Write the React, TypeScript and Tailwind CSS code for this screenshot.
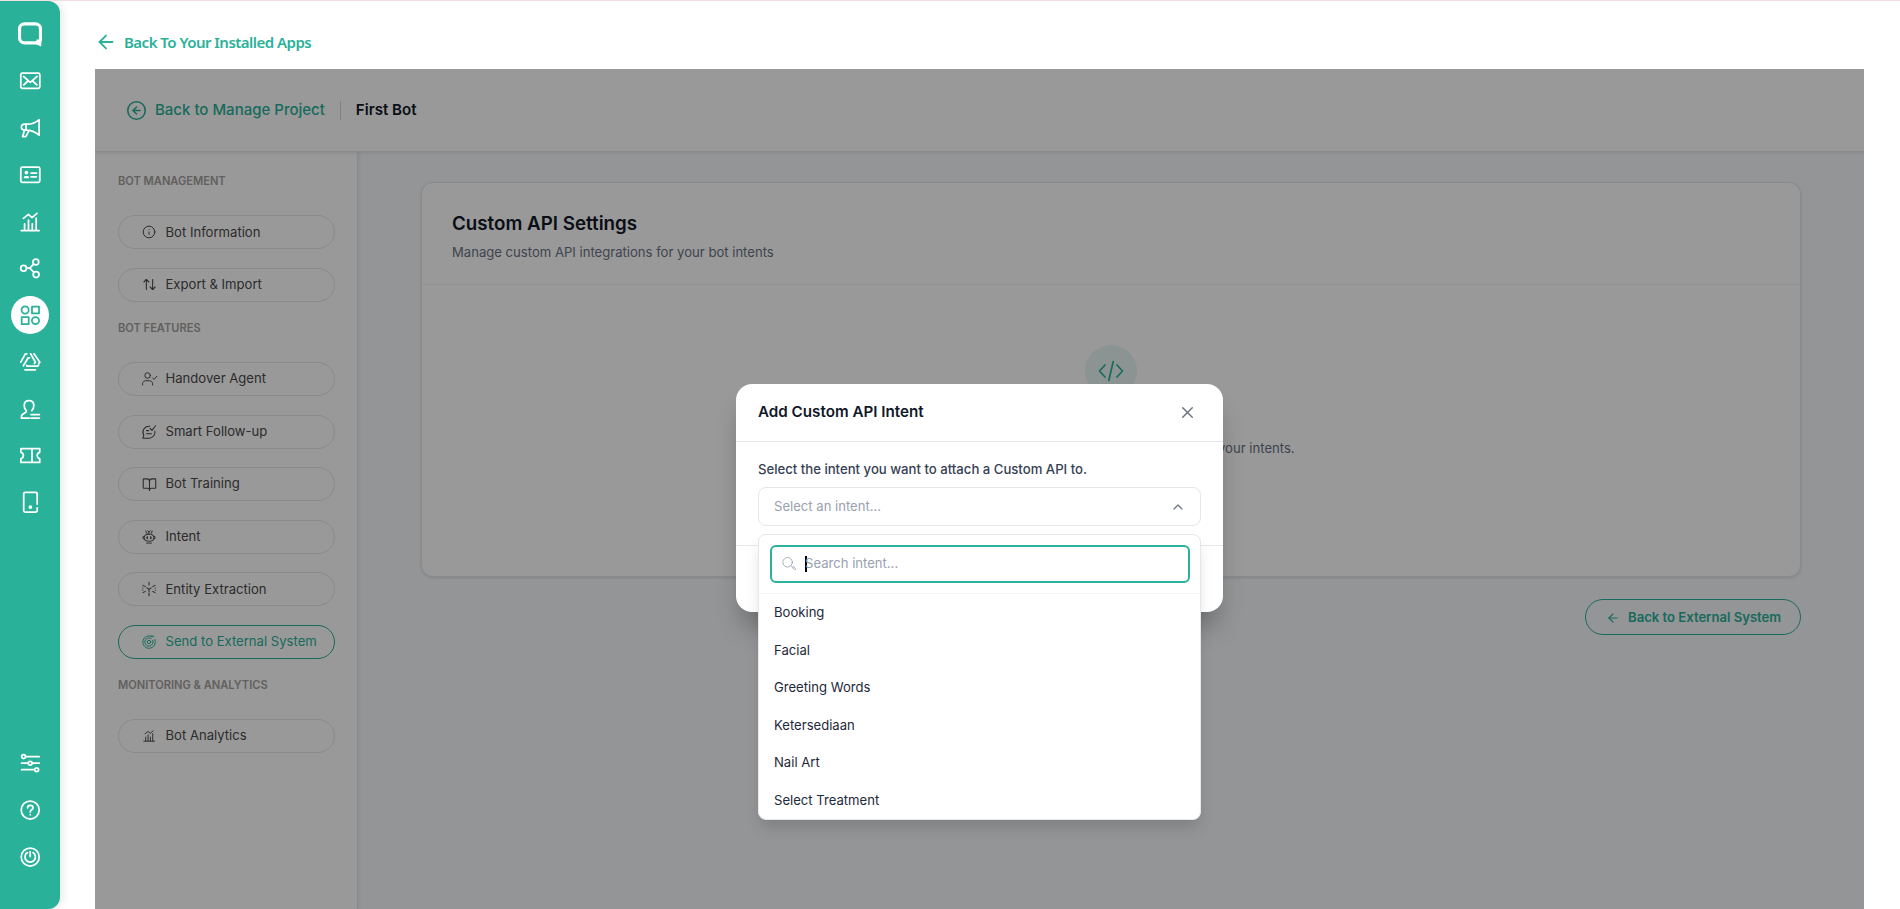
import React, { useState } from 'react';
import { ArrowLeft, ArrowUpDown, BookOpen, ChevronUp, CircleArrowLeft, Info, X } from 'lucide-react';

type IconProps = { size?: number; stroke?: number; children: React.ReactNode };

const Svg: React.FC<IconProps> = ({ size = 20, stroke = 1.75, children }) => (
  <svg
    width={size}
    height={size}
    viewBox="0 0 20 20"
    fill="none"
    stroke="currentColor"
    strokeWidth={stroke}
    strokeLinecap="round"
    strokeLinejoin="round"
    className="shrink-0 overflow-visible"
  >
    {children}
  </svg>
);

const LogoIcon = () => (
  <svg width="24" height="25" viewBox="0 0 24 25" fill="none" stroke="currentColor" className="shrink-0">
    <path d="M20.5 20.8h-14a5 5 0 0 1-5-5v-9a5 5 0 0 1 5-5h11a5 5 0 0 1 5 5v12" strokeWidth="3.2" />
    <path d="M18.5 17.5h5.2l-.6 7-5.4-2.6z" fill="currentColor" stroke="none" />
  </svg>
);

const MailIcon = () => (
  <Svg>
    <rect x="0.8" y="2.1" width="19" height="15.2" rx="1.6" />
    <path d="M3.6 5.5 10.3 11.3 17 5.5M3.8 13.9l3.6-3.4M16.8 13.9l-3.6-3.4" />
  </Svg>
);

const MegaphoneIcon = () => (
  <Svg>
    <path d="M6 6.2H4.3a2.9 2.9 0 0 0-2.9 3.3A2.9 2.9 0 0 0 4.3 12H6M6 6.2V12M6 6.2c5 .3 9-.9 13.1-4.6v15.6C15 13.5 11 12 6 12M4.5 12.6 2.6 18.6h3.2l3.2-6" />
  </Svg>
);

const ContactIcon = () => (
  <Svg>
    <rect x="0.8" y="2.1" width="19" height="15.2" rx="1.6" />
    <circle cx="6.4" cy="7.6" r="1" />
    <path d="M4.6 12.4h3.6M5 11.9h2.8M11 8h5.4M11 11.8h5.4" />
  </Svg>
);

const ChartIcon = ({ size = 20, stroke = 1.75 }) => (
  <Svg size={size} stroke={stroke}>
    <path d="M1.2 18.6h18M4.6 18.6v-6.800M8.5 18.6V8.2M12.3 18.6v-6.800M16.2 18.6V6M3.4 6.4l5-4 3.6 3.2L17 1.4" />
  </Svg>
);

const ShareIcon = () => (
  <Svg>
    <circle cx="3.6" cy="10.2" r="2.9" />
    <circle cx="15.8" cy="4" r="2.9" />
    <circle cx="16.1" cy="16.6" r="2.9" />
    <path d="M6.6 10.2h3.2l3.8-4M9.8 10.2l4.1 4.1" />
  </Svg>
);

const AppsIcon = () => (
  <Svg>
    <circle cx="5.1" cy="5" r="3.6" />
    <rect x="12" y="1.6" width="7" height="6.8" />
    <rect x="1.7" y="12.2" width="7" height="6.8" />
    <circle cx="15.5" cy="15.6" r="3.6" />
  </Svg>
);

const TriangleIcon = () => (
  <Svg>
    <path d="M.8 10.2 5.2 2.2l1.6-.4M3.4 13.8l4.8-8 1.2.1M10.6 1.8l4.8 8.4-1 1.4M14 1.8l5.8 8.4M19.6 10.4l-.8 1.2M7 14.2h10.6l1-1M5 17.8h10.4M7 14.2l-.2-.8" />
  </Svg>
);

const PersonIcon = () => (
  <Svg>
    <path d="M11.8 11.6c1.4-1.2 2-3.2 2-5.2 0-3-2-4.9-4.8-4.9S4.2 3.4 4.2 6.4c0 2.2.7 3.7 1.9 4.8.6.8.2 1.8-.6 2.3L2 15.8c-.6.5-.6 1.2-.6 3.2h7.8M11 15.6h8.4M11 19h8.4" />
  </Svg>
);

const TicketIcon = () => (
  <Svg>
    <path d="M.9 2.6h18.8v3.5c-1.9.9-2.6 1.9-2.6 3.4s.7 2.5 2.6 3.4v3.5H.9v-3.5c1.9-.9 2.6-1.9 2.6-3.4S2.8 7 .9 6.1zM12 2.6v13.8" />
  </Svg>
);

const DeviceIcon = () => (
  <Svg>
    <path d="M17.2 12V1.8c0-.8-.6-1.5-1.5-1.5H5.2c-.9 0-1.5.7-1.5 1.5v16.8c0 .8.6 1.5 1.5 1.5h10.5c.9 0 1.5-.7 1.5-1.5v-2.8" />
    <circle cx="10.4" cy="15" r="1" fill="currentColor" />
  </Svg>
);

const SlidersIcon = () => (
  <Svg>
    <circle cx="3.6" cy="3.6" r="1.9" />
    <circle cx="10.2" cy="10.2" r="1.9" />
    <circle cx="16.7" cy="16.7" r="1.9" />
    <path d="M5.8 3.6h13.4M1.6 10.2h6.3M12.4 10.2h6.8M1.6 16.7h12.8" />
  </Svg>
);

const HelpIcon = () => (
  <Svg>
    <circle cx="10.2" cy="10" r="9" />
    <path d="M7.6 7.8c0-1.6 1.2-2.5 2.7-2.5s2.7 1 2.7 2.4c0 2-2.7 2.2-2.7 4.2M10.3 14.7v.1" />
  </Svg>
);

const PowerIcon = () => (
  <Svg>
    <circle cx="10.2" cy="10" r="9" />
    <path d="M10.2 4.6v5M7.4 5.6a5.2 5.2 0 1 0 5.6 0" />
  </Svg>
);

const AgentIcon = () => (
  <Svg size={14} stroke={1.4}>
    <circle cx="8" cy="5" r="4" />
    <path d="M.8 18.5v-1.7c0-2.5 2-4.3 4.3-4.3h5.7c2.3 0 4.3 1.8 4.3 4.3v1.7M15.2 8.6l2 2 4-4.4" />
  </Svg>
);

const FollowUpIcon = () => (
  <Svg size={14} stroke={1.5}>
    <path d="M11 1.7H9.8A8.5 8.5 0 0 0 2.6 14.6L1.2 18.8H10a8.5 8.5 0 0 0 8.4-10M6.5 8h3M6.5 12.4h7M11.5 5l2.8 2.7L19.4 1" />
  </Svg>
);

const IntentIcon = () => (
  <Svg size={14} stroke={1.4}>
    <path d="M10 6V2.5M6.5 4.5 5.5 1.5M13.5 4.5l1-3M8 1l2 2 2-2M6.5 18.7h7M3 9.500H1.500v3H3M17 9.500h1.500v3H17" />
    <rect x="3" y="6" width="14" height="10" rx="5" />
    <path d="M7.5 10v2M12.5 10v2" strokeWidth="2.2" />
  </Svg>
);

const EntityIcon = () => (
  <Svg size={14} stroke={1.5}>
    <path d="M10 .5v3.8M10 15.7v3.8M10 10.5V14M10 10.5 7 8.3M10 10.5l3-2.2M1.500 4.800l3.200 1.800M18.500 4.800l-3.200 1.800M1.500 15.200l3.200-1.800M18.500 15.200l-3.200-1.800M1.200 8.300v.2M1.200 11.500v.2M18.800 8.300v.2M18.800 11.500v.2" />
  </Svg>
);

const TargetIcon = () => (
  <Svg size={14} stroke={1.4}>
    <path d="M14.500 2.200A9 9 0 1 0 18.400 6.500M13 4.900a5.900 5.900 0 1 0 2.400 2.800M13.500 1.200l3.500.8" />
    <circle cx="10" cy="10" r="2.4" />
  </Svg>
);

const SearchIcon = () => (
  <Svg size={14} stroke={1.2}>
    <circle cx="8" cy="7.5" r="6.800" />
    <path d="m13 12.5 2.200 2.200M15 14.800l1.300-1.300 3 3a1 1 0 0 1-1.400 1.400z" />
  </Svg>
);

const topRail = [
  LogoIcon, MailIcon, MegaphoneIcon, ContactIcon, ChartIcon, ShareIcon,
  AppsIcon, TriangleIcon, PersonIcon, TicketIcon, DeviceIcon,
];
const bottomRail = [SlidersIcon, HelpIcon, PowerIcon];

const menu = [
  {
    title: 'BOT MANAGEMENT',
    items: [
      { label: 'Bot Information', icon: <Info size={14} strokeWidth={1.7} /> },
      { label: 'Export & Import', icon: <ArrowUpDown size={15} strokeWidth={1.7} /> },
    ],
  },
  {
    title: 'BOT FEATURES',
    items: [
      { label: 'Handover Agent', icon: <AgentIcon /> },
      { label: 'Smart Follow-up', icon: <FollowUpIcon /> },
      { label: 'Bot Training', icon: <BookOpen size={15} strokeWidth={1.7} /> },
      { label: 'Intent', icon: <IntentIcon /> },
      { label: 'Entity Extraction', icon: <EntityIcon /> },
      { label: 'Send to External System', icon: <TargetIcon />, active: true },
    ],
  },
  {
    title: 'MONITORING & ANALYTICS',
    items: [{ label: 'Bot Analytics', icon: <ChartIcon size={12} stroke={1.6} /> }],
  },
];

const intents = ['Booking', 'Facial', 'Greeting Words', 'Ketersediaan', 'Nail Art', 'Select Treatment'];

const Rail = () => (
  <nav className="flex w-[60px] shrink-0 flex-col items-center justify-between rounded-r-xl bg-[#29b199] pt-2.5 pb-[29px] text-white shadow-[2px_0_8px_rgba(0,0,0,0.1)]">
    <div className="flex flex-col items-center">
      {topRail.map((Icon, i) => (
        <button key={i} className="flex h-[46.8px] items-center justify-center">
          <span className={Icon === AppsIcon ? 'flex size-[38px] items-center justify-center rounded-full bg-white text-[#29b199]' : ''}>
            <Icon />
          </span>
        </button>
      ))}
    </div>
    <div className="flex flex-col items-center">
      {bottomRail.map((Icon, i) => (
        <button key={i} className="flex h-[47px] items-center justify-center">
          <Icon />
        </button>
      ))}
    </div>
  </nav>
);

const BotMenu = () => (
  <aside className="z-10 w-[263px] shrink-0 border-r border-gray-200 bg-white pt-[3.4px] pr-[22px] pl-[23px] shadow-[1px_0_4px_rgba(0,0,0,0.08)]">
    {menu.map((group) => (
      <div key={group.title} className="pt-[17px]">
        <h3 className="mb-[25px] text-[11.1px]/[18px] font-semibold text-[#a3a09d]">{group.title}</h3>
        <div className="flex flex-col gap-[18.6px]">
          {group.items.map((item) => (
            <button
              key={item.label}
              className={`flex h-[34px] items-center gap-[9px] rounded-full border pl-[22.5px] text-[13.1px] ${
                'active' in item && item.active ? 'border-[#29b199] text-[#29b199]' : 'border-gray-200 text-[#4a4a4a]'
              }`}
            >
              <span className="flex w-[15px] justify-center">{item.icon}</span>
              {item.label}
            </button>
          ))}
        </div>
      </div>
    ))}
  </aside>
);

const IntentDialog = () => {
  const [query, setQuery] = useState('');

  return (
    <div className="h-[228px] w-[487px] rounded-2xl bg-white shadow-[0_20px_25px_-5px_rgba(0,0,0,0.25)]">
      <div className="flex h-[58px] items-center justify-between border-b border-gray-200 pr-[26px] pl-[22px]">
        <h2 className="text-[15.2px] font-semibold text-gray-900">Add Custom API Intent</h2>
        <X size={19} strokeWidth={1.8} className="-mt-px text-gray-500" />
      </div>
      <div className="h-[104px] border-b border-gray-200 px-[22px] pt-[17px]">
        <p className="text-[13.15px]/[20px] font-medium text-gray-700">Select the intent you want to attach a Custom API to.</p>
        <div className="relative mt-2">
          <button className="flex h-[39px] w-full items-center justify-between rounded-lg border border-gray-200 pr-3.5 pl-[15px] text-[13.1px] text-gray-400">
            Select an intent...
            <ChevronUp size={16} strokeWidth={1.8} className="text-gray-500" />
          </button>

          {/* Dropdown */}
          <div className="absolute top-[47px] right-0 left-0 h-[286px] rounded-lg border border-gray-200 bg-white shadow-[0_10px_15px_-3px_rgba(0,0,0,0.15)]">
            <div className="border-b border-gray-100 py-2.5 pr-2.5 pl-[11px]">
              <div className="flex h-[38px] items-center rounded-md border-2 border-[#29b199] pl-2.5">
                <span className="text-gray-400"><SearchIcon /></span>
                <span className="ml-[9px] h-4 w-0.5 bg-black" />
                <input
                  value={query}
                  onChange={(e) => setQuery(e.target.value)}
                  placeholder="Search intent..."
                  className="-ml-0.5 flex-1 text-[13.1px] outline-none placeholder:text-gray-400"
                />
              </div>
            </div>
            <ul className="pt-[0.4px]">
              {intents
                .filter((name) => name.toLowerCase().includes(query.toLowerCase()))
                .map((name) => (
                  <li key={name} className="flex h-[37.5px] items-center px-[15px] text-[13.1px] text-gray-800">{name}</li>
                ))}
            </ul>
          </div>
        </div>
      </div>
    </div>
  );
};

const App: React.FC = () => (
  <div className="flex h-screen overflow-hidden border-t border-[#f3dfe2] bg-white font-['Inter',sans-serif]">
    <Rail />

    <main className="flex min-w-0 flex-1 flex-col pr-9 pl-[35px]">
      <a href="#apps" className="flex h-[68px] shrink-0 items-center gap-[7px] pt-3.5 font-['Noto_Sans',sans-serif] text-[15px] font-semibold tracking-[-0.52px] text-[#29b199]">
        <ArrowLeft size={22} strokeWidth={2} />
        Back To Your Installed Apps
      </a>

      <div className="relative flex flex-1 flex-col overflow-hidden bg-[#f7f9fb]">
        <header className="z-20 flex h-[83px] shrink-0 items-center border-b border-gray-200 bg-white pl-[31px] text-[15px] shadow-[0_1px_3px_rgba(0,0,0,0.1)]">
          <a href="#projects" className="flex items-center gap-[9px] font-medium text-[#29b199]">
            <CircleArrowLeft size={21} strokeWidth={1.8} className="-mr-px" />
            Back to Manage Project
          </a>
          <span className="mx-[15px] h-[19px] w-px bg-gray-300" />
          <h1 className="text-[15.1px] font-semibold text-gray-900">First Bot</h1>
        </header>

        <div className="flex min-h-0 flex-1">
          <BotMenu />

          <section className="flex-1 pt-[30px] pr-[63px] pl-[63px]">
            <div className="h-[395px] rounded-xl border border-gray-200 bg-white shadow-[0_1px_3px_rgba(0,0,0,0.12)]">
              <div className="h-[102px] border-b border-gray-100 pt-[27px] pl-[30px]">
                <h2 className="text-[18.75px]/[28px] font-semibold text-gray-900">Custom API Settings</h2>
                <p className="mt-1 text-[13.1px]/[20px] text-gray-500">Manage custom API integrations for your bot intents</p>
              </div>
              <div className="flex flex-col items-center pt-[60px]">
                <div className="flex size-[52px] items-center justify-center rounded-full bg-[#e9f7f5] text-[#29b199]">
                  <svg width="26" height="22" viewBox="0 0 26 22" fill="none" stroke="currentColor" strokeWidth="1.7" strokeLinecap="round" strokeLinejoin="round">
                    <path d="M7 5 1.5 11 7 17M19 5l5.5 6L19 17M15.2 1.5 10.8 20.5" />
                  </svg>
                </div>
                <p className="mt-[41px] text-[13.1px]/[20px] text-gray-500">Add your first Custom API to begin connecting your intents.</p>
              </div>
            </div>

            <div className="mt-[22px] flex justify-end">
              <button className="flex h-9 w-[216px] items-center gap-2 rounded-full border border-[#29b199] pt-px pl-5 text-[13.1px] font-semibold text-[#29b199]">
                <ArrowLeft size={14} strokeWidth={2} />
                Back to External System
              </button>
            </div>
          </section>
        </div>

        <div className="absolute inset-0 z-30 flex items-start justify-center bg-black/40 pt-[315px]">
          <IntentDialog />
        </div>
      </div>
    </main>
  </div>
);

export default App;
